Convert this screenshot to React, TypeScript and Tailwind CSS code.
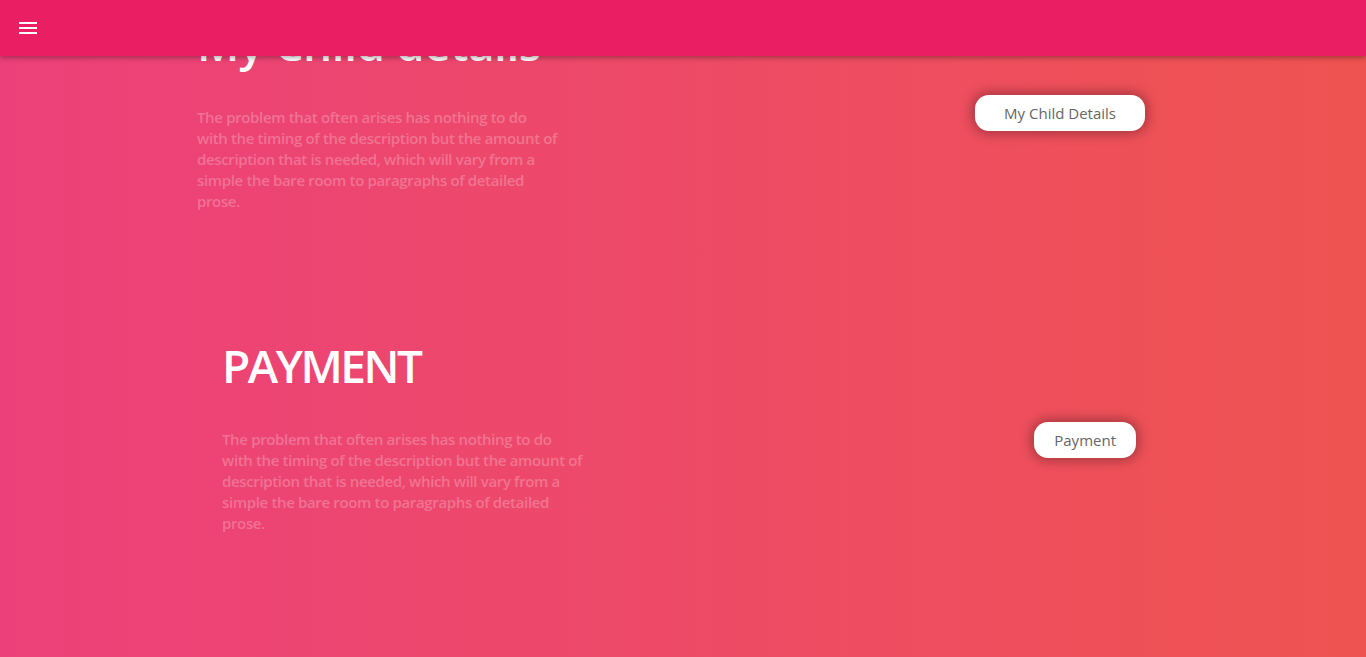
const blurbLines = [
  'The problem that often arises has nothing to do',
  'with the timing of the description but the amount of',
  'description that is needed, which will vary from a',
  'simple the bare room to paragraphs of detailed',
  'prose.',
];

function Blurb() {
  return (
    <p className="mt-[35px] text-[15px] leading-[21px] font-semibold tracking-[-0.35px] text-white/25 whitespace-nowrap">
      {blurbLines.map((line, i) => (
        <span key={i} className="block">
          {line}
        </span>
      ))}
    </p>
  );
}

export default function App() {
  return (
    <div className="min-h-screen bg-gradient-to-r from-[#ec407a] to-[#ef5350] font-['Open_Sans','Noto_Sans',sans-serif] overflow-hidden">
      {/* Top app bar */}
      <header className="fixed top-0 left-0 right-0 z-10 h-14 bg-[#e91e63] shadow-[0_2px_5px_rgba(0,0,0,0.3)] flex items-center px-4">
        <button className="text-white">
          <svg width="24" height="24" viewBox="0 0 24 24" fill="currentColor">
            <path d="M3 18h18v-2H3v2zm0-5h18v-2H3v2zm0-7v2h18V6H3z" />
          </svg>
        </button>
      </header>

      <main className="pt-[14px] pb-16">
        {/* My child section */}
        <section className="flex items-center justify-between pl-[197px] pr-[221px]">
          <div>
            <h2 className="text-[46px] leading-[58px] font-semibold tracking-[-0.5px] text-white">My Child details</h2>
            <Blurb />
          </div>
          <button className="h-9 px-[29px] rounded-[14px] bg-white text-[15px] text-[#666] shadow-[0_0_12px_3px_rgba(0,0,0,0.3)]">
            My Child Details
          </button>
        </section>

        {/* Payment section */}
        <section className="mt-[124px] flex items-center justify-between pl-[222px] pr-[230px]">
          <div>
            <h2 className="text-[46px] leading-[58px] font-semibold tracking-[-2.5px] text-white">PAYMENT</h2>
            <Blurb />
          </div>
          <button className="mt-[10px] h-9 px-5 rounded-[14px] bg-white text-[15px] text-[#666] shadow-[0_0_12px_3px_rgba(0,0,0,0.3)]">
            Payment
          </button>
        </section>
      </main>
    </div>
  );
}
